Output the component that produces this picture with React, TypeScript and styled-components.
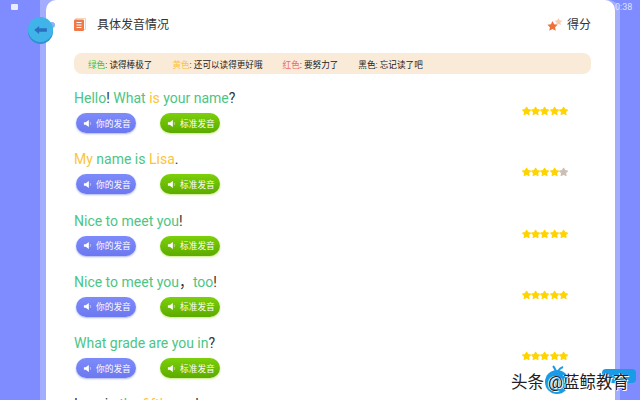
import * as React from "react"
import styled, { createGlobalStyle } from "styled-components"

const GlobalStyle = createGlobalStyle`
  html, body {
    margin: 0;
    padding: 0;
    height: 100%;
    overflow: hidden;
  }
  body {
    font-family: Roboto, "Noto Sans CJK SC", sans-serif;
  }
`

const Screen = styled.div`
  position: relative;
  width: 640px;
  height: 400px;
  overflow: hidden;
  background: #7f8cff;
  padding: 0 20px 0 40px;
  box-sizing: border-box;
`

const Sheet = styled.div`
  height: 100%;
  background: #a3adff;
  padding: 0 5px 0 6px;
  border-radius: 0 12px 0 0;
`

const Card = styled.div`
  height: 100%;
  background: #fff;
  border-radius: 10px 10px 0 0;
  padding: 0 24px 0 28px;
  overflow: hidden;
`

const Header = styled.div`
  display: flex;
  align-items: center;
  justify-content: space-between;
  height: 49px;
`

const HeaderSide = styled.div`
  display: flex;
  align-items: center;
  gap: 11px;
  font-size: 12px;
  line-height: 1;
  color: #333;
`

const ScoreSide = styled(HeaderSide)`
  gap: 4px;
`

const Legend = styled.div`
  display: flex;
  align-items: center;
  height: 21px;
  margin-top: 4px;
  padding-left: 14px;
  border-radius: 8px;
  background: #faebd9;
  font-size: 8.6px;
  color: #222;
`

const LegendItem = styled.span`
  margin-right: 20px;
`

const Tint = styled.span<{ $color: string }>`
  color: ${({ $color }) => $color};
`

const Rows = styled.div`
  margin-top: 7px;
`

const Row = styled.div`
  display: flex;
  justify-content: space-between;
  height: 61.25px;
  padding-top: 8px;
  box-sizing: border-box;
`

const RowLeft = styled.div`
  display: flex;
  flex-direction: column;
  gap: 6px;
`

const Sentence = styled.div`
  font-size: 14px;
  line-height: 18px;
  color: #333;
  white-space: pre;
`

const Buttons = styled.div`
  display: flex;
  gap: 24px;
  padding-left: 2px;
`

const VoiceButton = styled.div<{ $top: string; $bottom: string; $glow: string }>`
  display: flex;
  align-items: center;
  gap: 4px;
  width: 60px;
  height: 20px;
  padding-left: 7px;
  box-sizing: border-box;
  border-radius: 10px;
  background: linear-gradient(${({ $top }) => $top}, ${({ $bottom }) => $bottom});
  box-shadow: 0 1px 2px ${({ $glow }) => $glow};
  color: #fff;
  font-size: 8.7px;
`

const Stars = styled.div`
  display: flex;
  margin-top: 17px;
  margin-right: 23px;
  height: 10px;
`

const Back = styled.div`
  position: absolute;
  left: 28px;
  top: 17px;
  width: 25px;
  height: 25px;
  border-radius: 50%;
  background: #40b4e8;
  box-shadow: 0 2px 0 #2f90d4;
  display: flex;
  align-items: center;
  justify-content: center;
`

const BackBump = styled.div`
  position: absolute;
  left: 49px;
  top: 22px;
  width: 6px;
  height: 6px;
  border-radius: 50%;
  background: #8fb0f0;
`

const StatusIcon = styled.div`
  position: absolute;
  left: 11px;
  top: 4px;
  width: 7px;
  height: 6px;
  border-radius: 1px;
  background: #e8eaff;
`

const Clock = styled.div`
  position: absolute;
  left: 615px;
  top: 2px;
  font-size: 9px;
  color: #dfe3ff;
`

const Watermark = styled.div`
  position: absolute;
  left: 511px;
  top: 369px;
  font-size: 16.5px;
  color: #222;
  white-space: pre;
  text-shadow: 1px 1px 0 #fff, -1px 0 0 #fff;
`

const WatermarkLogo = styled.svg`
  position: absolute;
  left: 543px;
  top: 365px;
`

const WatermarkBadge = styled.div`
  position: absolute;
  left: 602px;
  top: 369px;
  width: 34px;
  height: 14px;
  border-radius: 4px;
  background: #1a9be8;
`

const Speaker = () => (
  <svg width="9" height="9" viewBox="0 0 10 10" fill="#fff">
    <path d="M1 3.500h2L6.500 1v8L3 6.500H1z" />
    <path d="M8 3.500q1 1.500 0 3" stroke="#fff" fill="none" strokeWidth="0.8" opacity="0.7" />
  </svg>
)

const Star = ({ on }: { on: boolean }) => (
  <svg width="9.200" height="10" viewBox="0 0 10 10">
    <path
      d="M5 1l1.300 2.500 2.900.4-2.100 2 .5 2.800L5 7.400 2.400 8.700l.5-2.800-2.100-2 2.900-.4z"
      fill={on ? "#ffd400" : "#cbbfb4"}
      stroke={on ? "#ffd400" : "#cbbfb4"}
      strokeWidth="1.300"
      strokeLinejoin="round"
    />
  </svg>
)

const G = "#4cc585"
const Y = "#fcc43c"

type Word = [string, string?]

const rows: { words: Word[]; score: number }[] = [
  {
    words: [["Hello", G], ["! "], ["What", G], [" "], ["is", Y], [" "], ["your name", G], ["?"]],
    score: 5,
  },
  { words: [["My", Y], [" "], ["name is", G], [" "], ["Lisa", Y], ["."]], score: 4 },
  { words: [["Nice to meet you", G], ["!"]], score: 5 },
  { words: [["Nice to meet you", G], ["，"], ["too", G], ["!"]], score: 5 },
  { words: [["What grade are you in", G], ["?"]], score: 5 },
  { words: [["I am in "], ["the", G], [" "], ["fifth", Y], [" grade."]], score: 5 },
]

export default function App() {
  return (
    <>
      <GlobalStyle />
      <Screen>
        <Sheet>
          <Card>
            <Header>
              <HeaderSide>
                <svg width="12" height="13" viewBox="0 0 12 13">
                  <rect x="2" y="0.500" width="9.500" height="11" fill="none" stroke="#f7c8a8" strokeWidth="0.8" />
                  <rect x="0" y="1.500" width="10" height="11.500" rx="1" fill="#f0794a" />
                  <path d="M2.500 4.500h5M2.500 7h5M2.500 9.500h5" stroke="#fff" strokeWidth="1" />
                </svg>
                具体发音情况
              </HeaderSide>
              <ScoreSide>
                <svg width="16" height="14" viewBox="0 0 16 14">
                  <path
                    d="M11.500 0l1.200 2.300 2.600.4-1.900 1.800.5 2.600-2.400-1.200-2.400 1.200.5-2.600-1.900-1.800 2.600-.4z"
                    fill="#f9cdb0"
                  />
                  <path
                    d="M5.500 3l1.600 3.200 3.500.5-2.500 2.500.6 3.500-3.200-1.700-3.200 1.700.6-3.500L.4 6.700l3.500-.5z"
                    fill="#f0703a"
                  />
                </svg>
                得分
              </ScoreSide>
            </Header>
            <Legend>
              <LegendItem>
                <Tint $color="#3ec23e">绿色</Tint>: 读得棒极了
              </LegendItem>
              <LegendItem>
                <Tint $color="#fcc43c">黄色</Tint>: 还可以读得更好哦
              </LegendItem>
              <LegendItem>
                <Tint $color="#ee6a6a">红色</Tint>: 要努力了
              </LegendItem>
              <LegendItem>黑色: 忘记读了吧</LegendItem>
            </Legend>
            <Rows>
              {rows.map((row, i) => (
                <Row key={i}>
                  <RowLeft>
                    <Sentence>
                      {row.words.map(([text, color], j) =>
                        color ? (
                          <Tint key={j} $color={color}>
                            {text}
                          </Tint>
                        ) : (
                          <span key={j}>{text}</span>
                        ),
                      )}
                    </Sentence>
                    <Buttons>
                      <VoiceButton $top="#7d8bfa" $bottom="#6b78f0" $glow="#aab3ff">
                        <Speaker />
                        你的发音
                      </VoiceButton>
                      <VoiceButton $top="#7cd00a" $bottom="#5cab00" $glow="#c8ec80">
                        <Speaker />
                        标准发音
                      </VoiceButton>
                    </Buttons>
                  </RowLeft>
                  <Stars>
                    {[0, 1, 2, 3, 4].map((n) => (
                      <Star key={n} on={n < row.score} />
                    ))}
                  </Stars>
                </Row>
              ))}
            </Rows>
          </Card>
        </Sheet>
        <StatusIcon />
        <Clock>0:38</Clock>
        <BackBump />
        <Back>
          <svg width="15" height="10" viewBox="0 0 15 11">
            <path d="M0.500 5.500L6 1v2.500h8.500v4H6V10z" fill="#2a6fc0" />
          </svg>
        </Back>
        <WatermarkLogo width="30" height="30" viewBox="0 0 30 30">
          <circle cx="14" cy="17" r="12" fill="#1a9be8" />
          <path d="M13 6q-2-4-3-5M15 6q2-3 5-4" stroke="#1a9be8" strokeWidth="2" fill="none" />
        </WatermarkLogo>
        <WatermarkBadge />
        <Watermark>头条 @蓝鲸教育</Watermark>
      </Screen>
    </>
  )
}
